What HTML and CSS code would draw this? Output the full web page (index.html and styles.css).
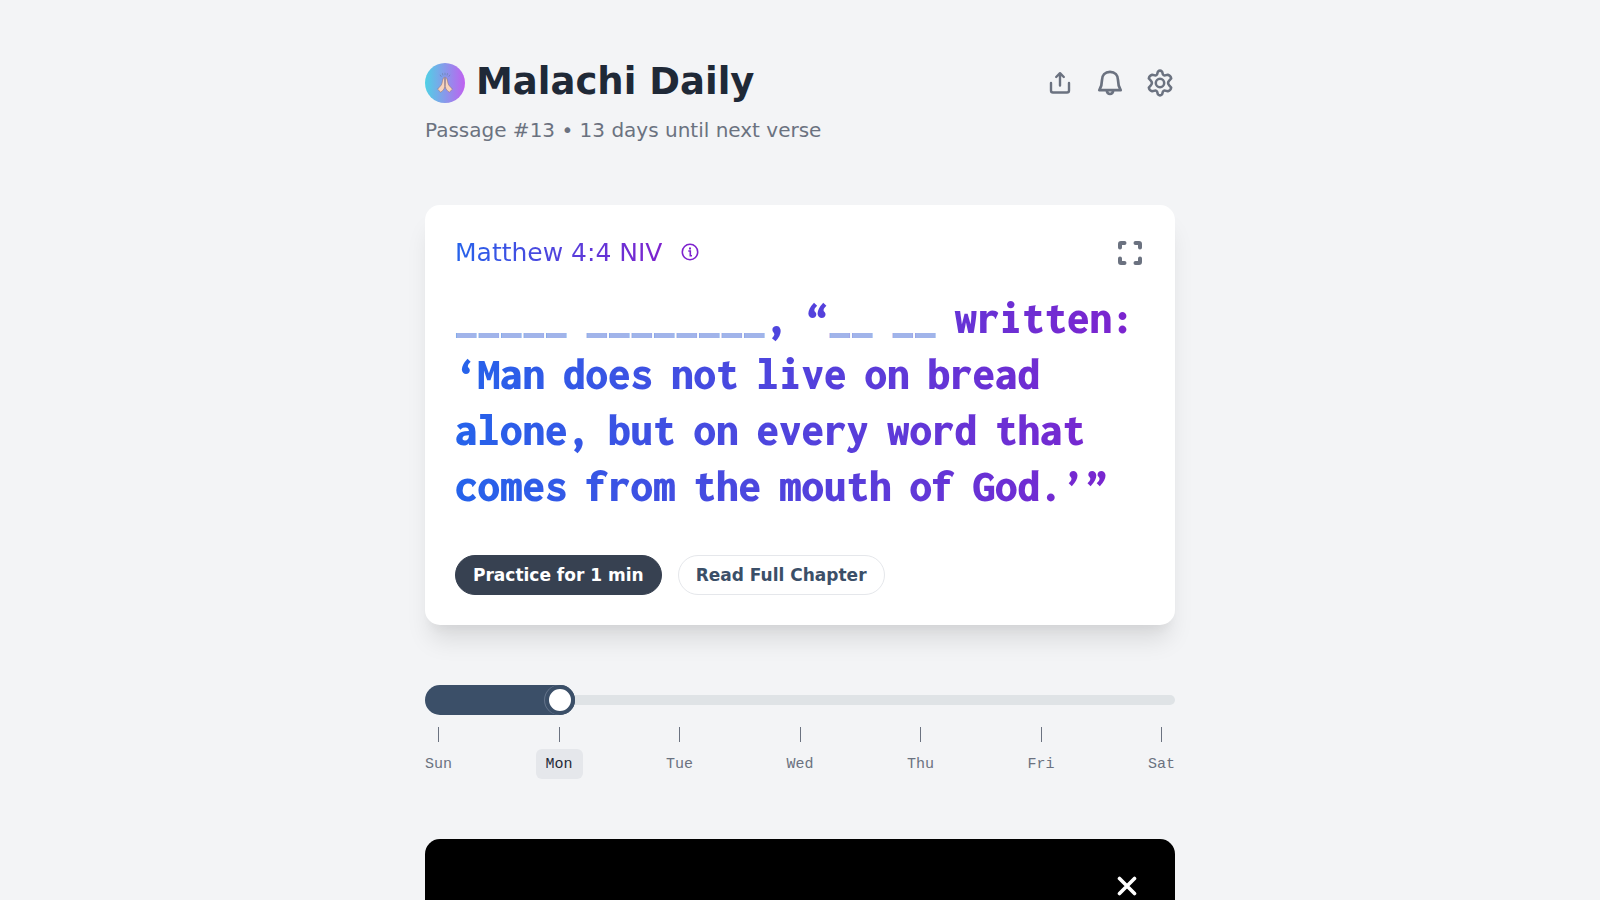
FILE: index.html
```html
<!DOCTYPE html>
<html lang="en">
<head>
<meta charset="utf-8">
<meta name="viewport" content="width=device-width, initial-scale=1">
<title>Malachi Daily</title>
<link rel="stylesheet" href="styles.css">
</head>
<body>
<main class="page">
  <header class="header">
    <div class="title-row">
      <div class="brand">
        <span class="logo">
          <svg width="20" height="22" viewBox="0 0 20 22" aria-hidden="true">
            <g fill="#f7d3bd" stroke="#8a6a66" stroke-width=".5" stroke-linejoin="round">
              <path d="M9.4 5.2C8.2 5.4 7.6 8 7 11.3 6.4 13.7 4.300 15 2.600 17.200L5.700 20.200C7.600 18.900 9.300 17.300 9.700 14.500Z"/>
              <path d="M10.600 5.200C11.800 5.400 12.400 8 13 11.300 13.600 13.700 15.700 15 17.400 17.200L14.300 20.200C12.400 18.900 10.700 17.300 10.300 14.500Z"/>
            </g>
            <path d="M10 .8v2.400M7.400 1.200l.6 2.300M12.600 1.200l-.6 2.300M5 2.800l1.400 2M15 2.800l-1.400 2" fill="none" stroke="#6d86b4" stroke-width=".8"/>
          </svg>
        </span>
        <h1 class="title">Malachi Daily</h1>
      </div>
      <div class="actions">
        <button class="icon-button" type="button" aria-label="Share">
          <svg width="30" height="30" viewBox="0 0 30 30" fill="none" stroke="currentColor" stroke-width="2.400" stroke-linecap="round" stroke-linejoin="round"><path d="M15 17.500V5.500M11.200 9L15 5.200l3.800 3.800M6 15v7.500a2 2 0 0 0 2 2h14a2 2 0 0 0 2-2V15"/></svg>
        </button>
        <button class="icon-button" type="button" aria-label="Notifications">
          <svg width="30" height="30" viewBox="0 0 30 30" fill="none" stroke="currentColor" stroke-width="2.700" stroke-linecap="round" stroke-linejoin="round"><path d="M15 3.800c-5 0-8 3.600-8 8.200 0 4.500-1 7.400-2.700 10.200h21.400C24 19.400 23 16.500 23 12c0-4.600-3-8.200-8-8.200zM11.800 22.500a3.200 3.500 0 0 0 6.400 0"/></svg>
        </button>
        <button class="icon-button" type="button" aria-label="Settings">
          <svg width="30" height="30" viewBox="0 0 30 30" fill="none" stroke="currentColor" stroke-width="2.500" stroke-linejoin="round"><path d="M12.900 3.600Q15 1.600 17.100 3.600L17.900 6.400Q18.600 7.600 20 7.400L22.900 6.700Q25.700 7.500 26.200 10.400L24.200 12.600Q22 15 24.200 17.400L26.200 19.600Q25.700 22.500 22.900 23.300L20 22.600Q18.600 22.400 17.900 23.600L17.100 26.400Q15 28.400 12.900 26.400L12.100 23.600Q11.400 22.400 10 22.600L7.100 23.300Q4.300 22.500 3.800 19.600L5.800 17.400Q8 15 5.800 12.600L3.800 10.400Q4.300 7.500 7.100 6.700L10 7.400Q11.400 7.600 12.100 6.400Z"/><circle cx="15" cy="15" r="4.200"/></svg>
        </button>
      </div>
    </div>
    <p class="subtitle">Passage #13 • 13 days until next verse</p>
  </header>

  <section class="card">
    <div class="card-head">
      <h2 class="reference"><span class="reference-text">Matthew 4:4 NIV</span>
        <button class="info-button" type="button" aria-label="Passage information">
          <svg width="18" height="18" viewBox="0 0 18 18" fill="none" stroke="currentColor" stroke-width="1.600"><circle cx="9" cy="9" r="7.700"/><path d="M7.300 8h2v4.800h1.700"/><path d="M9 4.600v2" stroke-width="2"/></svg>
        </button>
      </h2>
      <button class="expand-button" type="button" aria-label="Full screen">
        <svg width="24" height="24" viewBox="0 0 24 24" fill="none" stroke="currentColor" stroke-width="4" stroke-linecap="round" stroke-linejoin="round"><path d="M2 6.500V3a1 1 0 0 1 1-1h3.500M17.500 2H21a1 1 0 0 1 1 1v3.500M22 17.500V21a1 1 0 0 1-1 1h-3.500M6.500 22H3a1 1 0 0 1-1-1v-3.500"/></svg>
      </button>
    </div>
    <p class="verse">
      <span class="blank">_____</span> <span><span class="blank">________</span>,</span> <span>“<span class="blank">__</span></span> <span class="blank">__</span> <span>written:</span>
      <span>‘Man</span> <span>does</span> <span>not</span> <span>live</span> <span>on</span> <span>bread</span>
      <span>alone,</span> <span>but</span> <span>on</span> <span>every</span> <span>word</span> <span>that</span>
      <span>comes</span> <span>from</span> <span>the</span> <span>mouth</span> <span>of</span> <span>God.’”</span>
    </p>
    <div class="card-actions">
      <button class="pill pill-dark" type="button">Practice for 1 min</button>
      <a class="pill pill-light" href="#chapter">Read Full Chapter</a>
    </div>
  </section>

  <section class="week" aria-label="Day of the week">
    <div class="slider">
      <span class="slider-track"></span>
      <span class="slider-fill"></span>
      <input class="slider-input" type="range" min="0" max="6" value="1" aria-label="Day">
    </div>
    <ol class="days">
      <li class="day"><span class="day-label">Sun</span></li>
      <li class="day"><span class="day-label day-current">Mon</span></li>
      <li class="day"><span class="day-label">Tue</span></li>
      <li class="day"><span class="day-label">Wed</span></li>
      <li class="day"><span class="day-label">Thu</span></li>
      <li class="day"><span class="day-label">Fri</span></li>
      <li class="day"><span class="day-label">Sat</span></li>
    </ol>
  </section>

  <section class="promo">
    <button class="close-button" type="button" aria-label="Close">
      <svg width="20" height="20" viewBox="0 0 20 20" fill="none" stroke="currentColor" stroke-width="3.600" stroke-linecap="round"><path d="M2.500 2.500l15 15M17.500 2.500l-15 15"/></svg>
    </button>
  </section>
</main>
</body>
</html>
```
FILE: styles.css
```css
* {
  box-sizing: border-box;
}

body {
  margin: 0;
  height: 100vh;
  overflow: hidden;
  background: #f3f4f6;
  color: #1f2937;
  font-family: "DejaVu Sans", sans-serif;
}

h1, h2, p, ol {
  margin: 0;
  padding: 0;
}

button {
  padding: 0;
  border: 0;
  background: none;
  font: inherit;
  color: inherit;
  cursor: pointer;
}

svg {
  display: block;
}

.page {
  max-width: 750px;
  margin: 0 auto;
  padding-top: 58px;
}

.title-row {
  display: flex;
  align-items: center;
  justify-content: space-between;
  height: 49px;
}

.brand {
  display: flex;
  align-items: center;
  gap: 11px;
}

.logo {
  display: grid;
  place-items: center;
  width: 40px;
  height: 40px;
  border-radius: 50%;
  background: linear-gradient(to right, #4fd1e5, #c060f0);
}

.title {
  font-size: 37px;
  line-height: 44px;
  padding-bottom: 2px;
}

.actions {
  display: flex;
  gap: 20px;
  color: #6b7280;
}

.subtitle {
  margin-top: 8px;
  font-size: 20px;
  line-height: 30px;
  color: #6b7280;
}

.card {
  margin-top: 60px;
  padding: 30px;
  border-radius: 15px;
  background: #fff;
  box-shadow: 0 20px 25px -5px rgba(0, 0, 0, .1), 0 10px 10px -5px rgba(0, 0, 0, .04);
}

.card-head {
  display: flex;
  align-items: center;
  justify-content: space-between;
  height: 35px;
  padding-right: 3px;
}

.reference {
  display: flex;
  align-items: center;
  gap: 19px;
  font-size: 25px;
  font-weight: 400;
  line-height: 35px;
}

.reference-text {
  background: linear-gradient(to right, #2563eb, #7e22ce);
  -webkit-background-clip: text;
  background-clip: text;
  color: transparent;
}

.info-button {
  padding-bottom: 2px;
  color: #7e22ce;
}

.expand-button {
  color: #6b7280;
}

.verse {
  display: flex;
  flex-wrap: wrap;
  column-gap: 18px;
  margin-top: 20px;
  font-family: Inconsolata, "DejaVu Sans Mono", monospace;
  font-size: 45px;
  font-weight: 900;
  line-height: 56px;
  background: linear-gradient(to right, #2563eb, #7e22ce);
  -webkit-background-clip: text;
  background-clip: text;
  color: transparent;
}

.blank {
  color: #a1b4ea;
}

.card-actions {
  display: flex;
  gap: 16px;
  margin-top: 41px;
}

.pill {
  padding: 0 17px;
  border: 1px solid #e5e7eb;
  border-radius: 20px;
  font-size: 17px;
  font-weight: 700;
  line-height: 38px;
  text-decoration: none;
}

.pill-dark {
  border-color: #374151;
  background: #374151;
  color: #fff;
}

.pill-light {
  color: #3b4f68;
}

.week {
  margin-top: 60px;
}

.slider {
  display: grid;
  align-items: center;
}

.slider > * {
  grid-area: 1 / 1;
}

.slider-track {
  height: 10px;
  border-radius: 5px;
  background: #dfe3e6;
}

.slider-fill {
  width: 20%;
  height: 30px;
  border-radius: 15px;
  background: #3b4f68;
}

.slider-input {
  appearance: none;
  width: 100%;
  height: 30px;
  margin: 0;
  background: none;
}

.slider-input::-webkit-slider-thumb {
  appearance: none;
  width: 30px;
  height: 30px;
  border: 4px solid #3b4f68;
  border-radius: 50%;
  background: #fff;
  box-shadow: -1px 0 0 #64748b;
}

.days {
  display: flex;
  justify-content: space-between;
  margin-top: 12px;
  list-style: none;
  font-family: "Liberation Mono", monospace;
  font-size: 15px;
  color: #6b7280;
}

.day {
  display: flex;
  flex-direction: column;
  align-items: center;
  gap: 7px;
  width: 27px;
}

.day::before {
  content: "";
  width: 1px;
  height: 15px;
  background: #6b7280;
}

.day-label {
  padding: 1px 10px 0;
  border-radius: 6px;
  line-height: 29px;
}

.day-current {
  background: #e5e7eb;
  color: #1f2937;
}

.promo {
  display: flex;
  justify-content: flex-end;
  min-height: 200px;
  margin-top: 60px;
  padding: 37px 38px;
  border-radius: 15px;
  background: #000;
  color: #fff;
}

.close-button {
  align-self: flex-start;
}
```
